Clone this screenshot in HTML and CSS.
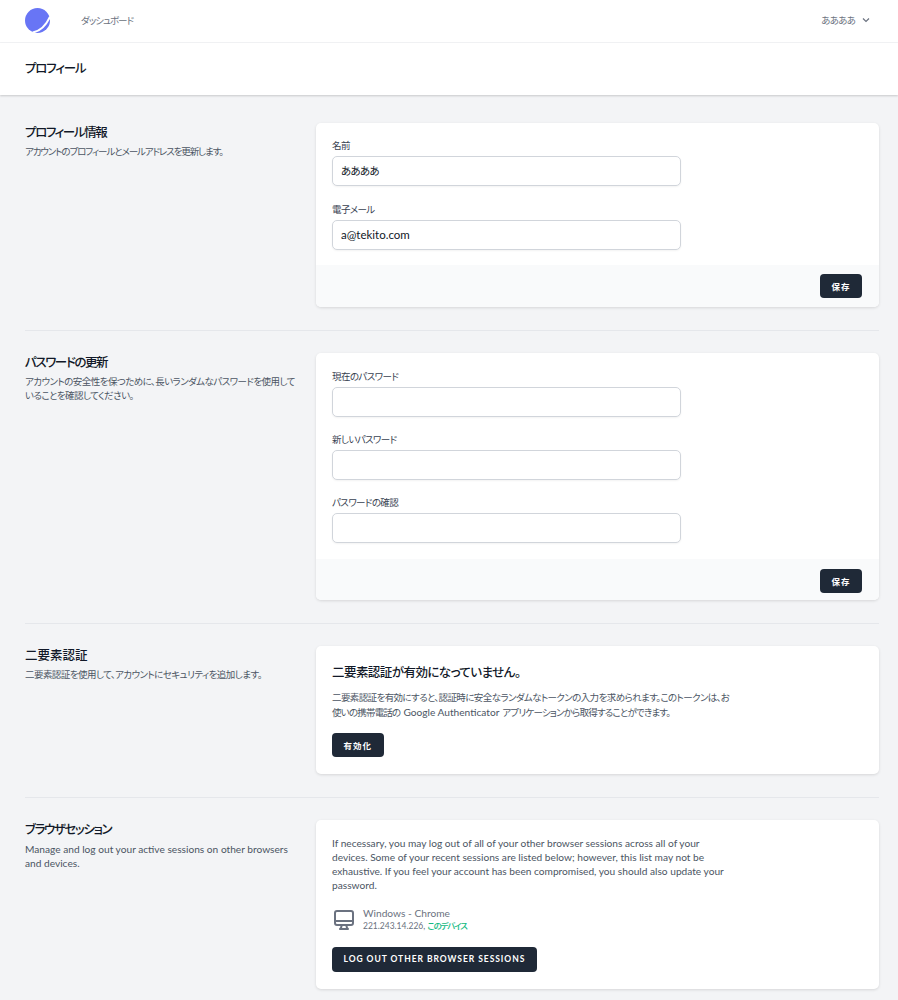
FILE: index.html
```html
<!DOCTYPE html>
<html lang="ja">
<head>
<meta charset="utf-8">
<title>プロフィール</title>
<link rel="stylesheet" href="styles.css">
</head>
<body>
<nav class="nav">
  <div class="nav-left">
    <svg class="logo" viewBox="0 0 26 26" width="25" height="25" aria-hidden="true">
      <circle cx="13" cy="13" r="13" fill="#6875f5"/>
      <path d="M8 25.5C15 24 22 18 26 9" fill="none" stroke="#fff" stroke-width="2"/>
    </svg>
    <a class="nav-link">ダッシュボード</a>
  </div>
  <div class="nav-user">
    <span>ああああ</span>
    <svg class="chev" viewBox="0 0 20 20" width="12" height="12" aria-hidden="true"><path d="M5 7.5l5 5 5-5" fill="none" stroke="#6b7280" stroke-width="2"/></svg>
  </div>
</nav>
<header class="page-header"><h1>プロフィール</h1></header>
<main class="main">
  <section class="row">
    <div class="aside"><h2 class="kana">プロフィール情報</h2><p class="tight">アカウントのプロフィールとメールアドレスを更新します。</p></div>
    <form class="card">
      <div class="fields fields-wide">
        <label class="field"><span>名前</span><input class="input input-jp" value="ああああ"></label>
        <label class="field"><span>電子メール</span><input class="input" value="a@tekito.com"></label>
      </div>
      <div class="actions"><button type="button" class="btn">保存</button></div>
    </form>
  </section>
  <hr class="divider">
  <section class="row">
    <div class="aside"><h2 class="kana">パスワードの更新</h2><p class="mid">アカウントの安全性を保つために、長いランダムなパスワードを使用していることを確認してください。</p></div>
    <form class="card">
      <div class="fields fields-tall">
        <label class="field"><span>現在のパスワード</span><input class="input" type="password"></label>
        <label class="field"><span>新しいパスワード</span><input class="input" type="password"></label>
        <label class="field"><span>パスワードの確認</span><input class="input" type="password"></label>
      </div>
      <div class="actions actions-short"><button type="button" class="btn">保存</button></div>
    </form>
  </section>
  <hr class="divider">
  <section class="row">
    <div class="aside"><h2>二要素認証</h2><p class="mid">二要素認証を使用して、アカウントにセキュリティを追加します。</p></div>
    <div class="card body">
      <h3>二要素認証が有効になっていません。</h3>
      <p class="text jp"><span class="line">二要素認証を有効にすると、認証時に安全なランダムなトークンの入力を求められます。このトークンは、お</span><span class="line line-2">使いの携帯電話の<span class="en">Google Authenticator</span>アプリケーションから取得することができます。</span></p>
      <button type="button" class="btn btn-enable">有効化</button>
    </div>
  </section>
  <hr class="divider">
  <section class="row">
    <div class="aside"><h2 class="kana">ブラウザセッション</h2><p class="latin">Manage and log out your active sessions on other browsers and devices.</p></div>
    <div class="card body session-card">
      <p class="text latin">If necessary, you may log out of all of your other browser sessions across all of your devices. Some of your recent sessions are listed below; however, this list may not be exhaustive. If you feel your account has been compromised, you should also update your password.</p>
      <div class="session">
        <svg viewBox="0 0 24 24" width="24" height="24" aria-hidden="true"><path d="M9.75 17L9 20l-1 1h8l-1-1-.75-3M3 13h18M5 17h14a2 2 0 002-2V5a2 2 0 00-2-2H5a2 2 0 00-2 2v10a2 2 0 002 2z" fill="none" stroke="#6b7280" stroke-width="2" stroke-linecap="round" stroke-linejoin="round"/></svg>
        <div class="session-info">
          <div class="device">Windows - Chrome</div>
          <div class="ip">221.243.14.226, <span class="this">このデバイス</span></div>
        </div>
      </div>
      <button type="button" class="btn btn-logout">Log Out Other Browser Sessions</button>
    </div>
  </section>
</main>
</body>
</html>
```
FILE: styles.css
```css
* { box-sizing: border-box; }
html, body { margin: 0; padding: 0; }
body {
  background: #f3f4f6;
  color: #111827;
  font-family: Lato, "Noto Sans CJK JP", sans-serif;
  font-feature-settings: "palt";
  height: 1000px;
  overflow: hidden;
}
.nav {
  height: 43px;
  background: #fff;
  border-bottom: 1px solid #f3f4f6;
  display: flex;
  align-items: center;
  justify-content: space-between;
  padding: 0 26px 2px 25px;
}
.nav-left { display: flex; align-items: center; gap: 31px; }
.logo { display: block; }
.nav-link { font-size: 9.5px; letter-spacing: -1px; color: #6b7280; }
.nav-user { display: flex; align-items: center; gap: 5px; font-size: 9.5px; letter-spacing: -.75px; color: #6b7280; }
.chev { display: block; }
.page-header {
  height: 52px;
  background: #fff;
  box-shadow: 0 1px 2px rgba(0,0,0,.18);
  display: flex;
  align-items: center;
  padding: 0 25px 3px;
}
h1 { margin: 0; font-size: 12.5px; letter-spacing: -1.2px; font-weight: 500; color: #111827; }
.main { padding: 28px 19px 0 25px; }
.row { display: flex; gap: 19px; align-items: flex-start; }
.aside { width: 272px; flex: none; }
.aside h2 { margin: 0; padding-top: 1px; font-size: 12.5px; font-weight: 500; line-height: 18px; color: #111827; }
.aside h2.kana { letter-spacing: -1.4px; }
.aside p { margin: 3px 0 0; font-size: 9.5px; line-height: 14px; color: #4b5563; }
.aside p.tight { letter-spacing: -1.1px; }
.aside p.mid { letter-spacing: -.55px; }
.aside p.latin { font-size: 10.17px; }
.card {
  flex: 1;
  background: #fff;
  border-radius: 5px;
  box-shadow: 0 1px 3px rgba(0,0,0,.12);
  overflow: hidden;
}
.fields { padding: 17px 17px 16px 16px; display: flex; flex-direction: column; gap: 17px; }
.fields-wide { gap: 18px; padding-bottom: 15px; }
.fields-tall { padding-top: 18px; }
.field { display: block; }
.field span { display: block; font-size: 9.5px; letter-spacing: -.6px; line-height: 12px; color: #374151; margin-bottom: 4px; }
.input {
  display: block;
  width: 349px;
  height: 30px;
  border: 1px solid #d1d5db;
  border-radius: 5px;
  background: #fff;
  padding: 0 8px 2px;
  font: inherit;
  font-size: 11.5px;
  color: #111827;
  box-shadow: 0 1px 2px rgba(0,0,0,.05);
  outline: none;
}
.input-jp { font-size: 10.5px; letter-spacing: -.7px; padding-bottom: 1px; }
.actions {
  background: #f9fafb;
  height: 42px;
  display: flex;
  align-items: center;
  justify-content: flex-end;
  padding: 0 17px;
}
.actions-short { height: 41px; padding-top: 2px; }
.btn {
  background: #1f2937;
  color: #fff;
  border: 0;
  border-radius: 4px;
  height: 24px;
  padding: 0 11.5px;
  font: inherit;
  font-size: 8.5px;
  font-weight: 700;
  letter-spacing: 1px;
  text-transform: uppercase;
}
.body { padding: 17px 16px 17px; }
h3 { margin: 0; padding-top: 1px; font-size: 12.5px; letter-spacing: -.55px; line-height: 17px; font-weight: 500; color: #111827; }
.text { margin: 10px 0 0; max-width: 410px; font-size: 9.5px; line-height: 14.5px; color: #4b5563; }
.line { display: block; white-space: nowrap; letter-spacing: -.6px; }
.line-2 { letter-spacing: -.8px; }
.en { font-size: 10.17px; letter-spacing: 0; line-height: 0; margin: 0 3px; }
.text.latin { font-size: 10.17px; }
.btn-enable { display: block; margin-top: 13px; }
.session-card { padding-top: 16px; padding-bottom: 17px; }
.session-card .text { max-width: 396px; margin: 0; line-height: 14px; }
.session { display: flex; align-items: center; gap: 7px; margin-top: 14.5px; }
.session svg { display: block; }
.device { font-size: 10.2px; line-height: 13px; color: #6b7280; }
.ip { font-size: 8.5px; line-height: 13px; color: #6b7280; }
.this { color: #10b981; font-weight: 500; letter-spacing: -1.2px; }
.btn-logout { display: block; margin-top: 14px; height: 25px; letter-spacing: .95px; }
.divider { border: 0; border-top: 1px solid #e5e7eb; margin: 22.5px 0; }
```
